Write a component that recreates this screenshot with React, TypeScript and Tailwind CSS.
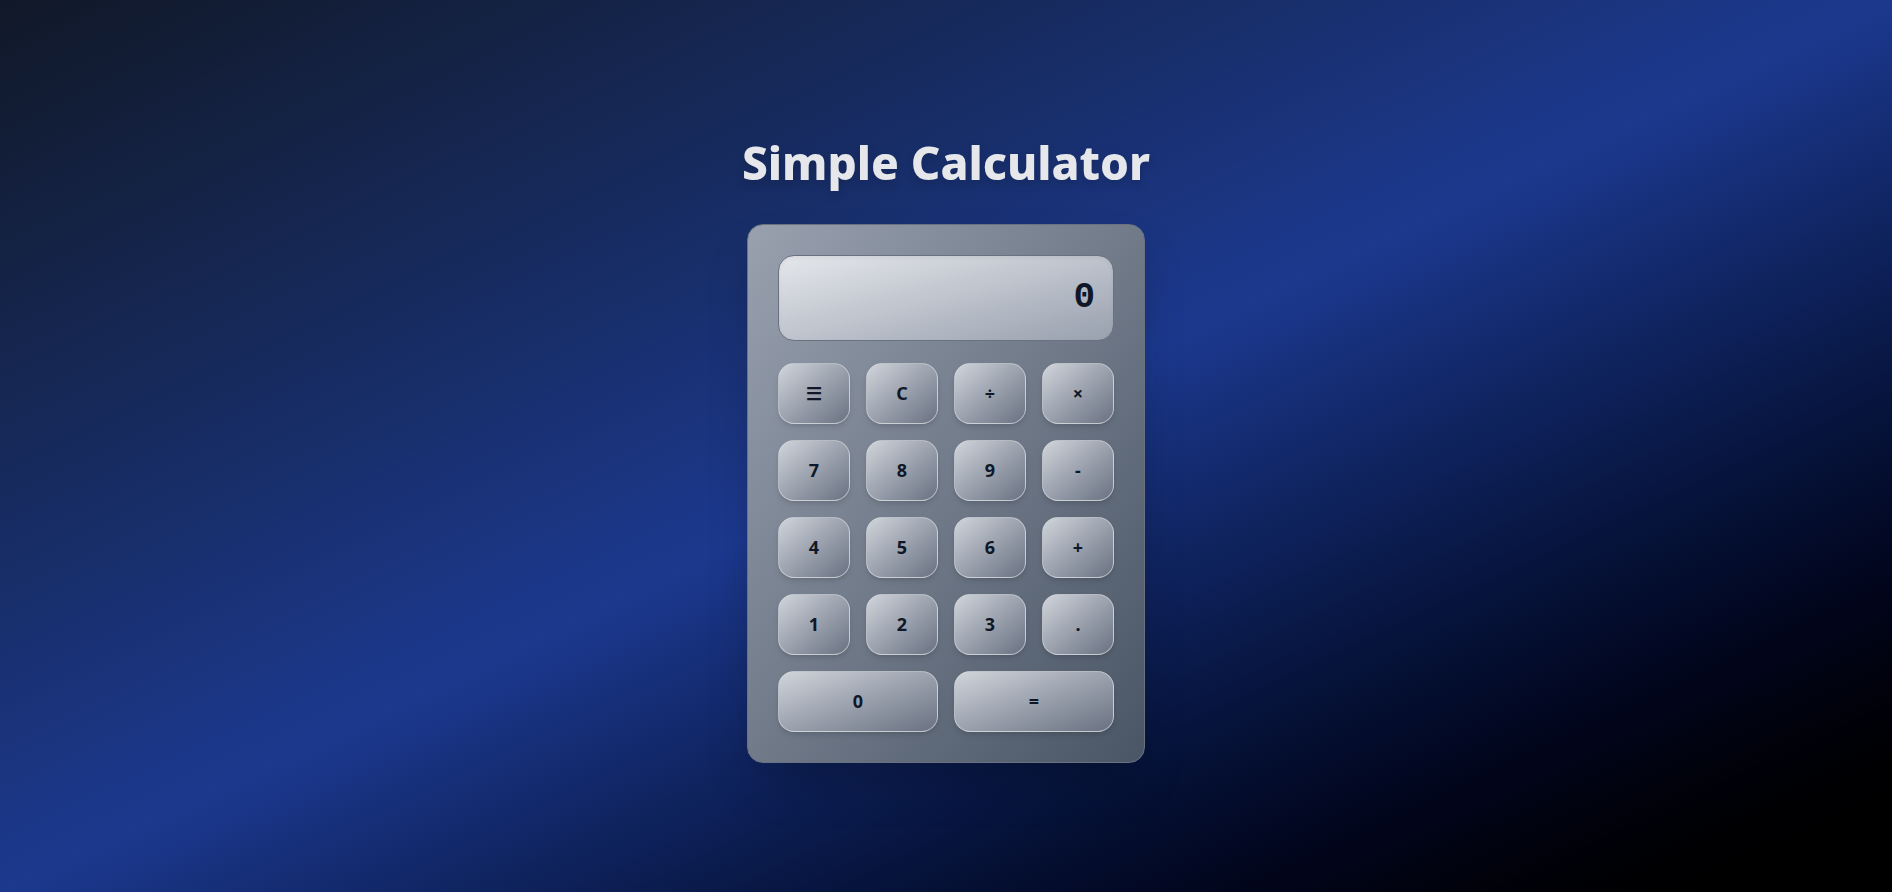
const KEYS = [
  { label: '☰' },
  { label: 'C' },
  { label: '÷' },
  { label: '×' },
  { label: '7' },
  { label: '8' },
  { label: '9' },
  { label: '-' },
  { label: '4' },
  { label: '5' },
  { label: '6' },
  { label: '+' },
  { label: '1' },
  { label: '2' },
  { label: '3' },
  { label: '.' },
  { label: '0', wide: true },
  { label: '=', wide: true },
];

export default function App() {
  return (
    <div className="min-h-screen w-full flex flex-col items-center justify-center bg-gradient-to-br from-gray-900 via-blue-900 to-black font-sans">
      <h1 className="text-[46px] leading-[48px] font-extrabold text-gray-200 drop-shadow-lg mb-[38px] pt-[8px]">
        Simple Calculator
      </h1>

      {/* Calculator body */}
      <div className="w-[398px] p-[30px] rounded-2xl bg-gradient-to-br from-gray-400 to-gray-600 border border-gray-500 shadow-2xl">
        <div className="h-[86px] mb-[22px] flex items-center justify-end pl-5 pr-[18px] rounded-2xl bg-gradient-to-br from-gray-200 to-gray-400 border border-gray-500 shadow-inner">
          <span className="font-mono text-4xl font-bold text-gray-900">0</span>
        </div>

        <div className="grid grid-cols-4 gap-4">
          {KEYS.map((k) => (
            <button
              key={k.label}
              className={`h-[61px] flex items-center justify-center rounded-2xl bg-gradient-to-br from-gray-300 to-gray-500 border border-gray-300/70 shadow-md text-lg font-bold text-gray-900 ${
                k.wide ? 'col-span-2' : ''
              }`}
            >
              {k.label}
            </button>
          ))}
        </div>
      </div>
    </div>
  );
}
